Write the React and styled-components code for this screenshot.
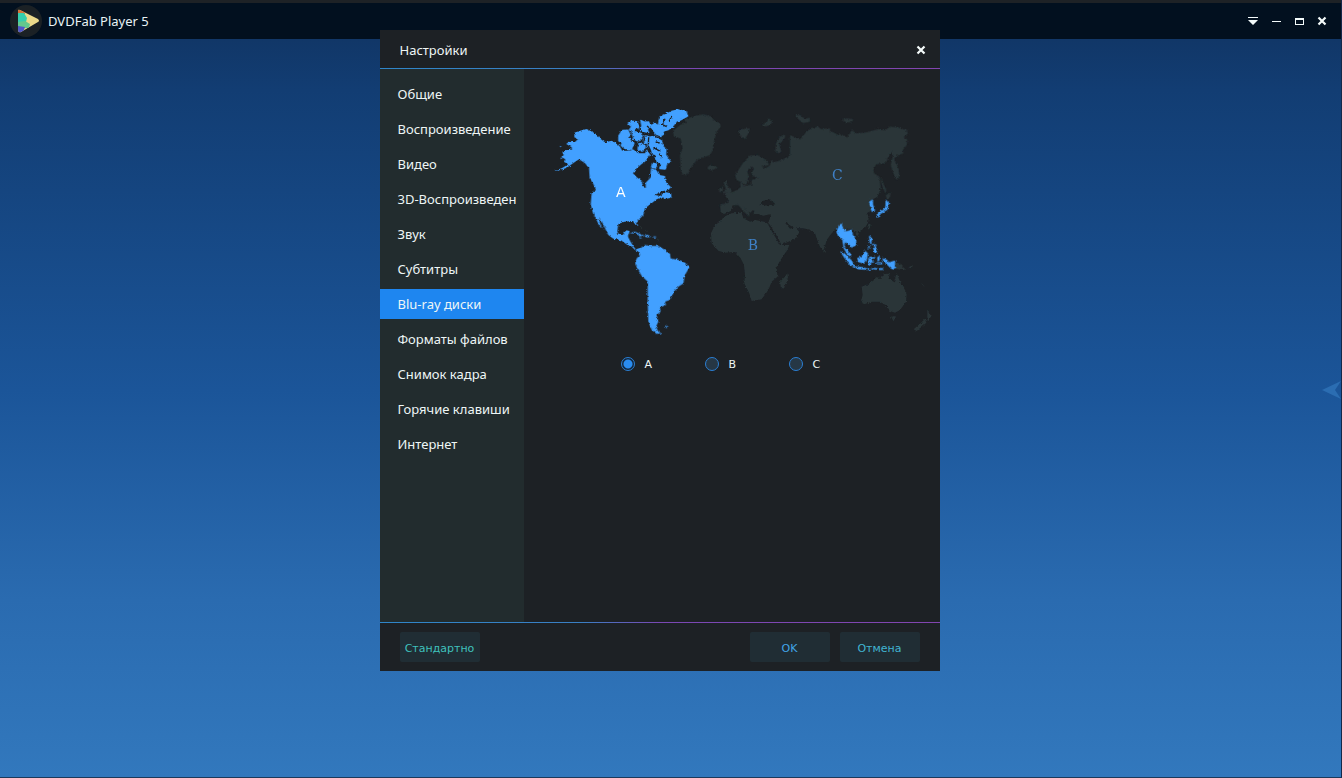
import React, { useState } from "react";
import styled, { createGlobalStyle } from "styled-components";

const GlobalStyle = createGlobalStyle`
  * { box-sizing: border-box; }
  html, body { margin: 0; }
  body, button, input { font-family: "Noto Sans", Verdana, sans-serif; }
`;

const Window = styled.div`
  position: relative;
  display: flex;
  flex-direction: column;
  min-height: 100vh;
  border-right: 1px solid #14294a;
  border-bottom: 1px solid #1b3a5c;
  background: linear-gradient(#10325f 0, #123d73 90px, #1b5599 390px, #2a6bb0 600px, #3278bd 100%);
`;

const TitleBar = styled.header`
  display: flex;
  align-items: center;
  justify-content: space-between;
  height: 39px;
  padding: 0 9px 0 10px;
  border-top: 3px solid #1e2226;
  background: #02101f;
`;

const Brand = styled.div`
  display: flex;
  align-items: center;
  gap: 6px;
  color: #e9f3f6;
  font-size: 13px;
  line-height: 16px;
`;

const WindowControls = styled.div`
  display: flex;
  gap: 3px;
`;

const IconButton = styled.button`
  display: flex;
  align-items: center;
  justify-content: center;
  width: 20px;
  height: 20px;
  padding: 0;
  border: 0;
  background: none;
  color: #f4fbfb;
`;

const Content = styled.main`
  display: flex;
  flex: 1;
  align-items: center;
  justify-content: flex-end;
`;

const Dialog = styled.section`
  position: absolute;
  top: 30px;
  left: calc(50% - 291px);
  display: flex;
  flex-direction: column;
  width: 560px;
  background: #1d2125;
`;

const DialogHeader = styled.header`
  display: flex;
  align-items: center;
  justify-content: space-between;
  height: 38px;
  padding: 2px 9px 0 20px;
`;

const DialogTitle = styled.h1`
  margin: 0;
  color: #eef6f6;
  font-size: 13px;
  font-weight: 400;
  line-height: 16px;
`;

const Rule = styled.div`
  height: 1px;
  background: linear-gradient(90deg, #2f86c9, #3a7fc4 36%, #7a48b4 50%, #8245b0);
`;

const DialogBody = styled.div`
  display: flex;
  min-height: 553px;
`;

const Sidebar = styled.nav`
  display: flex;
  flex-direction: column;
  gap: 5px;
  width: 144px;
  padding: 10px 0;
  background: #222c2e;
`;

const NavItem = styled.button`
  height: 30px;
  padding: 0 0 0 18px;
  border: 0;
  background: ${(p) => (p.$active ? "#1e86f0" : "transparent")};
  color: #eef6f6;
  font-size: 13px;
  line-height: 16px;
  text-align: left;
  white-space: nowrap;
`;

const Panel = styled.div`
  display: flex;
  flex: 1;
  flex-direction: column;
  align-items: center;
  padding-top: 31px;
`;

const MapDrawing = styled.svg`
  width: 395px;
  height: 240px;
  margin-left: 21px;
`;

const MapLabel = styled.text`
  fill: ${(p) => (p.$active ? "#ffffff" : "#3f80c6")};
  font-family: ${(p) => (p.$active ? '"DejaVu Sans", sans-serif' : '"DejaVu Serif", serif')};
  font-size: 42px;
  text-anchor: middle;
`;

const RegionChoices = styled.div`
  display: flex;
  gap: 50px;
  width: 100%;
  padding: 15px 0 0 97px;
`;

const Choice = styled.label`
  display: flex;
  align-items: center;
  gap: 10px;
  width: 34px;
  color: #eef6f6;
  font-family: "DejaVu Sans", Verdana, sans-serif;
  font-size: 11px;
  line-height: 16px;
`;

const ChoiceText = styled.span`
  padding-top: 2px;
`;

const Radio = styled.input`
  appearance: none;
  flex: none;
  width: 14px;
  height: 14px;
  margin: 0;
  border: 1px solid #2a7fd4;
  border-radius: 50%;
  background: #263745;

  &:checked {
    background: radial-gradient(circle, #2a8cf0 0 4px, #12263c 5px);
  }
`;

const DialogFooter = styled.footer`
  display: flex;
  gap: 10px;
  padding: 9px 20px;
`;

const ActionButton = styled.button`
  width: 80px;
  height: 30px;
  padding: 3px 0 0;
  margin-right: ${(p) => (p.$pushRest ? "auto" : "0")};
  border: 0;
  border-radius: 2px;
  background: #202d34;
  color: ${(p) => p.$color};
  font-family: "DejaVu Sans", Verdana, sans-serif;
  font-size: 11px;
  line-height: 16px;
`;

const DrawerToggle = styled.button`
  display: flex;
  padding: 0;
  margin-bottom: 36px;
  border: 0;
  background: none;
`;

const sections = [
  "Общие",
  "Воспроизведение",
  "Видео",
  "3D-Воспроизведен",
  "Звук",
  "Субтитры",
  "Blu-ray диски",
  "Форматы файлов",
  "Снимок кадра",
  "Горячие клавиши",
  "Интернет",
];

function Logo() {
  return (
    <svg width="32" height="32" viewBox="0 0 32 32" aria-hidden="true">
      <defs>
        <clipPath id="play"><path d="M8 6Q8 4 10 5L28 14Q30 16 28 17L11 27Q8 28 8 25Z" /></clipPath>
      </defs>
      <circle cx="16" cy="16" r="16" fill="#1b2125" />
      <g clipPath="url(#play)">
        <path d="M8 4H31V28H8Z" fill="#ecd98a" />
        <path d="M8 4L15 6V9H8Z" fill="#d4733a" />
        <path d="M8 8L14 8L17 13L16 17L8 18Z" fill="#35cfae" />
        <path d="M8 17L15 16L20 19L19 23H8Z" fill="#63c98d" />
        <path d="M8 21L15 22L13 28H8Z" fill="#5158c8" />
      </g>
    </svg>
  );
}

function CloseIcon() {
  return (
    <svg width="10" height="10" viewBox="0 0 10 10" aria-hidden="true">
      <path d="M1.5 1.5L8.5 8.5M8.5 1.5L1.5 8.5" stroke="currentColor" strokeWidth="2.2" />
    </svg>
  );
}

function WorldMap({ region }) {
  return (
    <MapDrawing viewBox="0 0 1185 720" role="img" aria-label="Blu-ray">
      <defs>
        <filter id="coast" x="-5%" y="-5%" width="110%" height="110%">
          <feTurbulence type="fractalNoise" baseFrequency="0.15" numOctaves="2" seed="4" />
          <feDisplacementMap in="SourceGraphic" scale="9" xChannelSelector="R" yChannelSelector="G" />
        </filter>
      </defs>
      <g fill="#2a3639" filter="url(#coast)">
        <g transform="translate(375 15)">
          <path d="M8 78L30 60L50 52L44 44L58 38L80 32L100 28L125 35L130 44L150 55L152 65L140 80L132 110L128 135L120 150L98 158L80 165L65 185L50 210L38 208L32 195L30 150L38 130L32 100L12 95Z" />
          <path d="M112 188L120 180L138 182L138 190L125 197L114 192Z" />
          <path d="M202 80L215 72L240 70L235 85L225 102L212 95L208 86Z" />
          <path d="M345 88L330 95L318 115L316 135L325 145L334 140L328 118L345 98Z" />
          <path d="M275 58L290 52L296 40L306 48L302 60L286 64ZM376 30L392 30L402 42L418 38L420 50L400 54L386 44Z" />
          <path d="M160 230L170 228L172 240L185 258L180 265L160 264L167 250ZM148 250L158 245L158 258L148 262Z" />
          <path d="M195 210L205 195L220 172L240 152L262 150L290 165L297 180L275 185L285 191L300 181L303 165L310 172L325 168L345 160L362 150L378 158L386 150L375 140L362 125L368 118L385 132L384 112L400 90L420 75L480 70V340H310L315 295L302 285L298 277L285 280L276 285L272 298L262 305L248 318L238 322L228 310L215 295L240 328L236 335L218 315L205 300L188 300L175 318L153 320L150 298L172 295L178 285L165 275L180 265L200 255L212 246L210 234L217 232L220 244L230 241L245 239L245 225L265 218L250 214L245 205L252 190L245 185L232 200L236 215L228 240L215 232L200 225Z" />
        </g>
        <g transform="translate(735 15)">
          <path d="M0 90L35 105L45 85L60 70L85 65L95 75L100 95L125 80L142 88L160 90L171 98L185 76L200 85L230 82L265 72L285 76L300 65L325 68L350 75L355 88L340 95L352 104L350 120L338 135L340 145L325 150L312 160L325 190L328 215L320 225L308 200L302 180L309 150L306 140L295 155L290 170L280 175L258 178L250 195L252 205L268 215L272 250L262 265L245 285L250 310L190 365L0 350Z" />
          <path d="M17 28L30 34L55 44L50 50L34 46L22 38ZM155 42L172 40L190 43L185 51L168 52ZM274 215L280 235L289 256L286 265L277 244L272 224ZM287 270L302 263L300 276L290 282Z" />
        </g>
        <g transform="translate(765 270)">
          <path d="M0 0H242L232 20L215 30L206 38L198 42L190 38L198 60L206 82L204 98L196 112L184 121L172 126L158 120L148 116L130 125L116 110L108 118L95 130L80 150L72 178L66 180L59 168L50 145L45 130L30 120L0 112ZM167 127H177L174 137L168 136ZM206 100L212 104L207 119L202 112ZM72 178L78 180L76 188L70 187Z" />
          <path d="M185 290L205 282L220 272L228 262L244 264L252 252L270 251L265 265L282 276L290 249L298 270L312 295L320 310L318 335L300 360L285 368L268 362L262 348L240 335L215 335L195 342L183 335L188 315ZM273 378L288 380L280 394Z" />
          <path d="M382 358L388 372L395 377L383 392L382 378ZM375 386L379 398L350 423L341 418L362 400ZM285 215L300 222L318 240L304 240L287 236ZM325 232L339 226L334 235ZM364 280L374 290L366 286Z" />
        </g>
        <g transform="translate(465 270)">
          <path d="M62 66V44L86 45L90 35L82 25L76 8L330 0V115L285 115L268 105L260 95L255 98L270 116L285 112L298 125L290 142L270 153L244 164L235 145L210 105L204 98L208 92L212 72L190 77L175 72L161 72L165 55L177 46L188 44L206 49L228 42L211 28L190 32L184 40L174 46L166 65L154 55L138 40L128 35L140 48L153 60L144 70L137 56L119 40L100 45L91 64L72 72Z" />
          <path d="M72 80L95 70L125 68L130 85L150 95L165 90L200 97L205 105L225 140L240 165L268 165L262 180L245 205L230 230L232 260L215 275L205 300L185 328L155 333L148 310L133 280L135 255L132 225L122 205L105 185L75 188L55 182L35 160L33 130L45 105L60 95Z" />
          <path d="M240 275L255 260L262 250L264 265L252 295L243 295Z" />
        </g>
        <path d="M286 378L292 384M301 390L307 394M338 416L341 424" stroke="#2a3639" strokeWidth="3" />
      </g>
      <g fill="#42a0ff" filter="url(#coast)">
        <path d="M28 212L50 205L70 193L56 185L61 178L50 172L56 165L52 155L64 150L80 150L80 142L64 132L75 122L90 126L99 117L88 112L88 98L105 92L125 87L150 100L168 118L180 127L200 122L215 130L225 140L232 152L255 152L264 148L280 160L300 160L305 148L316 164L300 185L290 192L275 205L264 220L275 232L290 242L295 262L302 264L302 248L315 235L318 205L334 210L343 225L360 228L362 245L378 262L370 270L350 274L330 285L345 288L360 276L378 280L380 293L360 297L350 292L335 298L320 310L300 325L295 345L275 365L279 378L272 376L264 363L238 365L220 372L217 394L221 405L234 404L243 391L254 393L249 410L255 422L264 437L272 448L288 443L292 450L282 456L270 450L258 438L246 434L228 421L205 416L190 405L180 385L170 364L160 354L171 387L177 394L163 377L152 355L144 340L137 312L140 280L153 270L145 252L134 235L132 205L120 190L102 178L84 190L66 203L44 211ZM48 172L52 176L47 178ZM44 137L50 140L45 143Z" />
        <g stroke="#42a0ff" strokeWidth="5" strokeLinejoin="round">
          <path d="M222 108L232 92L248 91L255 105L246 114L262 118L266 130L258 150L240 145L229 136L233 128L222 122ZM250 70L262 64L275 66L283 80L270 86L266 95L254 89L261 80ZM288 62L298 67L310 66L317 78L306 88L310 98L290 97L284 88L292 82ZM262 98L282 95L291 108L282 122L268 118ZM281 132L292 129L300 142L292 153L280 148ZM298 108L310 110L306 130L296 124Z" />
          <path d="M350 108L334 102L326 92L318 80L328 68L340 80L345 52L360 45L380 35L400 30L422 35L427 48L405 60L395 62L385 75L370 88L356 92ZM314 112L330 108L348 118L352 138L362 148L361 165L375 185L364 192L360 207L345 205L350 192L337 184L331 175L336 164L322 160L318 145L308 138ZM323 190L335 193L332 204L320 202Z" />
        </g>
        <g transform="translate(135 270)">
          <path d="M145 180L165 165L180 168L205 168L225 180L240 192L242 205L265 210L285 218L298 232L285 255L280 280L265 290L252 305L240 330L225 335L228 345L210 352L212 365L200 375L205 395L198 410L205 425L215 430L200 432L185 420L175 395L173 340L173 275L155 258L142 235L135 220L140 205L150 195ZM225 410L235 408L232 414L226 414Z" />
          <path d="M118 130L135 125L153 133L164 137L151 139L136 130ZM162 139L171 134L184 140L172 142ZM148 142L157 143L150 146ZM190 139H198V142H190Z" />
        </g>
        <g transform="translate(765 270)" stroke="#42a0ff" strokeWidth="2">
          <path d="M118 105L125 102L128 115L138 125L155 120L158 135L168 150L168 165L155 172L145 162L135 155L132 165L138 178L150 190L152 200L142 192L132 175L128 150L115 138L110 125ZM122 185L135 192L155 212L163 229L150 225L135 205ZM160 229L190 233L210 239L175 237ZM215 235L232 235L228 238ZM238 235L250 236L244 241ZM172 205L185 200L195 183L203 190L200 208L190 220L175 215Z" />
          <path d="M206 205L210 201L226 203L213 207L221 217L213 216L211 226L206 225ZM249 205L262 211L266 218L284 213V238L273 235L260 222L250 213ZM233 202L238 199L238 211L233 213ZM230 218H246V222H230ZM208 138L215 145L213 158L220 163L210 158ZM218 164L229 164L226 171ZM217 176L228 173L232 185L224 187ZM204 178L208 166L208 173Z" />
          <path d="M208 35L218 30L218 42L224 62L216 65L212 50ZM258 30L266 40L262 58L247 68L233 74L236 66L249 61L257 50ZM231 71L238 75L234 83Z" />
        </g>
      </g>
      <path d="M270 90L292 97L320 104L352 119M282 68L286 85L280 96M306 78L318 88L326 104M294 98L299 120L288 133M311 112L310 137L318 158M257 118L272 126L281 139M360 56L352 74L365 80M380 48L372 65M332 126L344 129M325 143L346 154M343 161L351 174" fill="none" stroke="#1d2125" strokeWidth="4" filter="url(#coast)" />
      <MapLabel x="227" y="290" $active={region === "A"}>A</MapLabel>
      <MapLabel x="624" y="449" $active={region === "B"}>B</MapLabel>
      <MapLabel x="877" y="239" $active={region === "C"}>C</MapLabel>
    </MapDrawing>
  );
}

export default function App() {
  const [section, setSection] = useState("Blu-ray диски");
  const [region, setRegion] = useState("A");

  return (
    <Window>
      <GlobalStyle />
      <TitleBar>
        <Brand><Logo />DVDFab Player 5</Brand>
        <WindowControls>
          <IconButton aria-label="Меню">
            <svg width="10" height="8" viewBox="0 0 10 8" fill="currentColor"><path d="M0 0H10V1H0ZM0 3H10L5 8Z" /></svg>
          </IconButton>
          <IconButton aria-label="Свернуть">
            <svg width="9" height="1" viewBox="0 0 9 1" fill="currentColor"><path d="M0 0H9V1H0Z" /></svg>
          </IconButton>
          <IconButton aria-label="Развернуть">
            <svg width="9" height="7" viewBox="0 0 9 7" fill="currentColor" fillRule="evenodd"><path d="M0 0H9V7H0ZM1 2V6H8V2Z" /></svg>
          </IconButton>
          <IconButton aria-label="Закрыть"><CloseIcon /></IconButton>
        </WindowControls>
      </TitleBar>
      <Content>
        <DrawerToggle aria-label="Плейлист">
          <svg width="20" height="20" viewBox="0 0 20 20"><path d="M1 10L20 1L14 10L20 19Z" fill="#2b6db2" /></svg>
        </DrawerToggle>
      </Content>
      <Dialog role="dialog" aria-labelledby="settings-title">
        <DialogHeader>
          <DialogTitle id="settings-title">Настройки</DialogTitle>
          <IconButton aria-label="Закрыть настройки"><CloseIcon /></IconButton>
        </DialogHeader>
        <Rule />
        <DialogBody>
          <Sidebar>
            {sections.map((name) => (
              <NavItem key={name} $active={name === section} onClick={() => setSection(name)}>{name}</NavItem>
            ))}
          </Sidebar>
          <Panel>
            <WorldMap region={region} />
            <RegionChoices>
              {["A", "B", "C"].map((code) => (
                <Choice key={code}>
                  <Radio type="radio" name="region" checked={region === code} onChange={() => setRegion(code)} />
                  <ChoiceText>{code}</ChoiceText>
                </Choice>
              ))}
            </RegionChoices>
          </Panel>
        </DialogBody>
        <Rule />
        <DialogFooter>
          <ActionButton $color="#3fc1bd" $pushRest>Стандартно</ActionButton>
          <ActionButton $color="#41a5e8">OK</ActionButton>
          <ActionButton $color="#40b4d2">Отмена</ActionButton>
        </DialogFooter>
      </Dialog>
    </Window>
  );
}
